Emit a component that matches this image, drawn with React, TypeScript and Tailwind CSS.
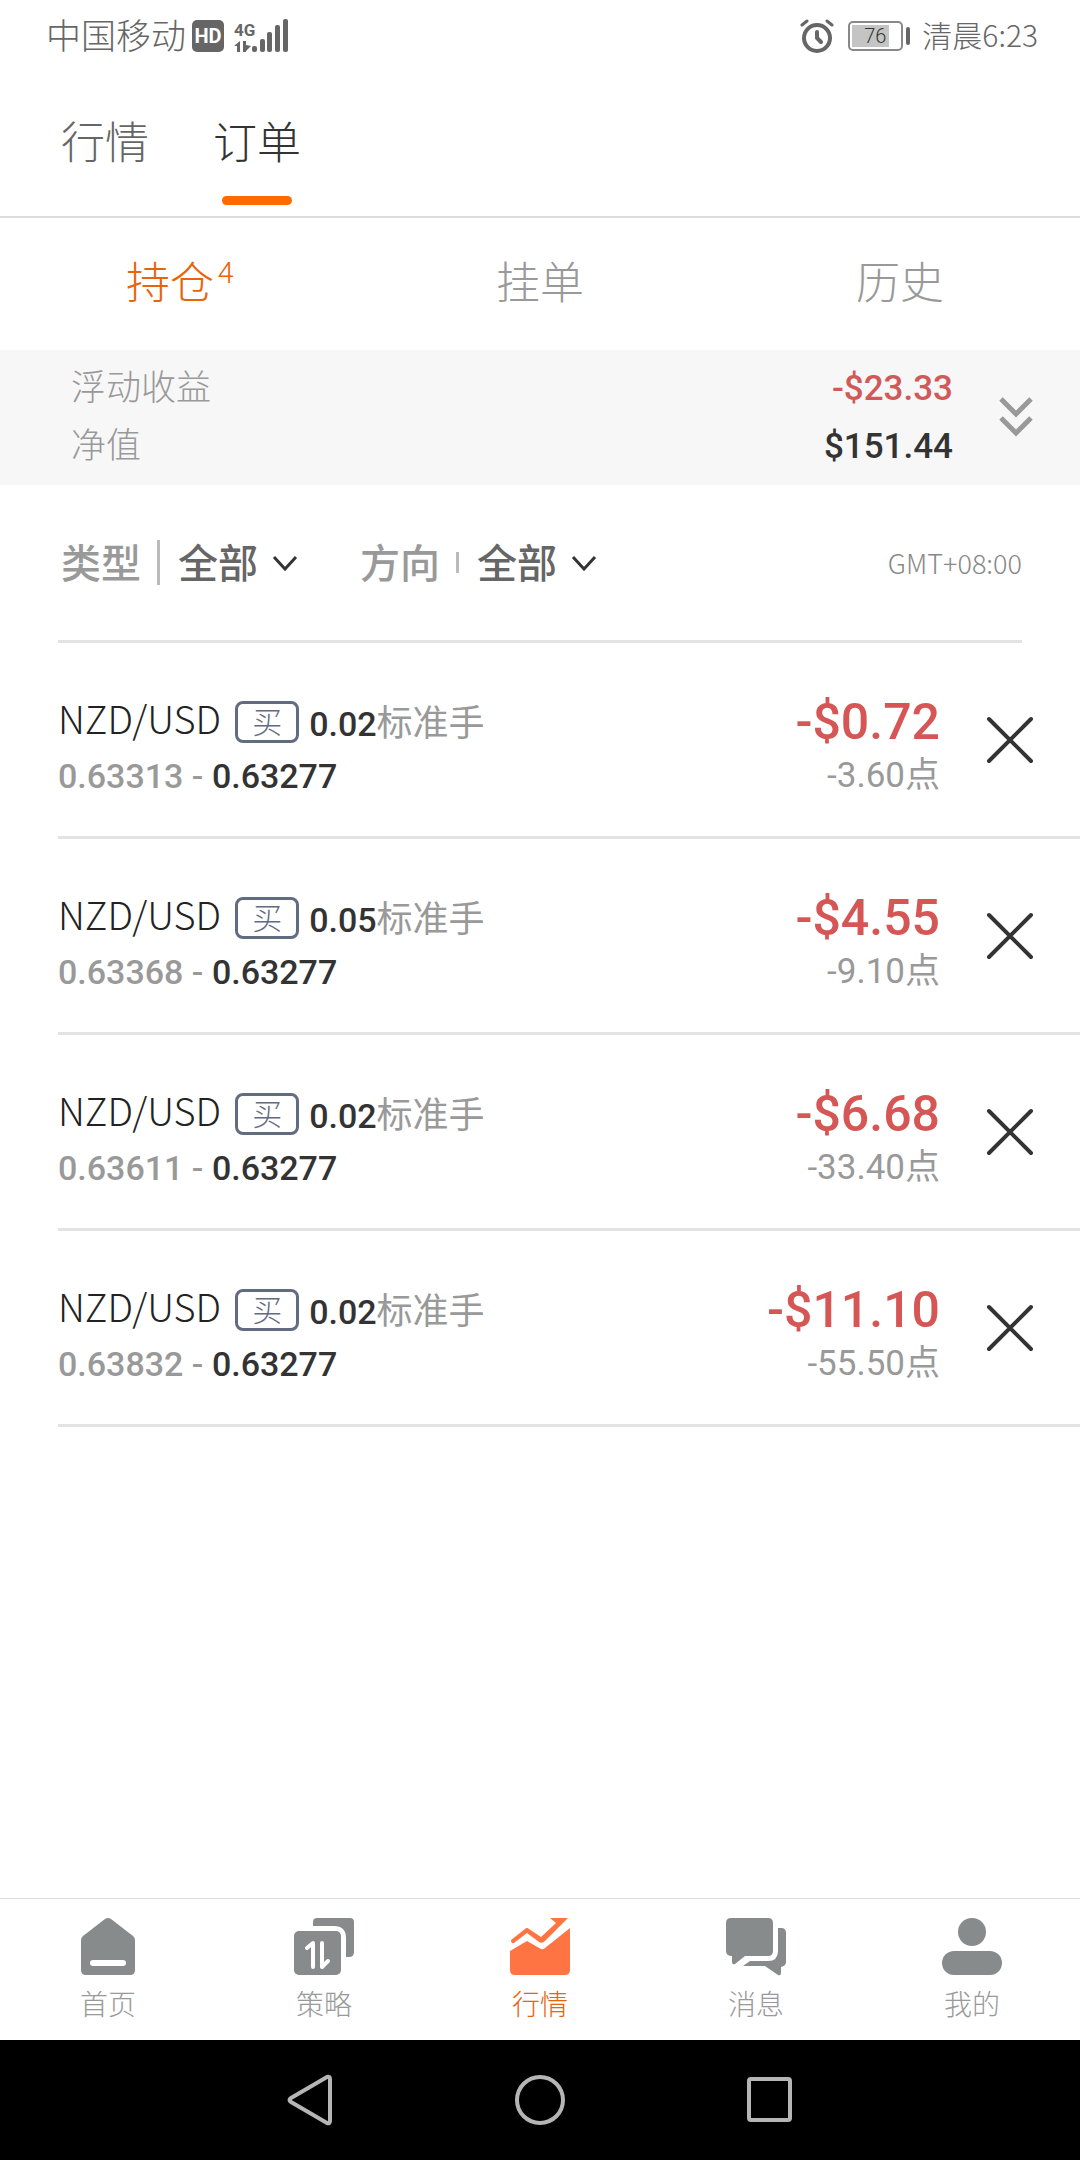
import { useState } from "react";

type Order = {
  id: number;
  symbol: string;
  side: string;
  lots: string;
  open: string;
  current: string;
  profit: string;
  points: string;
};

const orders: Order[] = [
  { id: 1, symbol: "NZD/USD", side: "买", lots: "0.02", open: "0.63313", current: "0.63277", profit: "-$0.72", points: "-3.60" },
  { id: 2, symbol: "NZD/USD", side: "买", lots: "0.05", open: "0.63368", current: "0.63277", profit: "-$4.55", points: "-9.10" },
  { id: 3, symbol: "NZD/USD", side: "买", lots: "0.02", open: "0.63611", current: "0.63277", profit: "-$6.68", points: "-33.40" },
  { id: 4, symbol: "NZD/USD", side: "买", lots: "0.02", open: "0.63832", current: "0.63277", profit: "-$11.10", points: "-55.50" },
];

function StatusBar() {
  return (
    <div className="flex h-[72px] items-center justify-between pl-[46px] pr-[42px] text-[#666]">
      <div className="flex items-center">
        <span className="pb-1 text-[35px] leading-[48px] font-light">中国移动</span>
        <span className="ml-[6px] flex h-8 w-8 items-center justify-center rounded-[5px] bg-[#666] font-['Roboto'] text-[20px] leading-none font-bold text-white">
          HD
        </span>
        <div className="ml-[10px] flex h-[34px] items-end">
          <div className="flex w-[18px] flex-col items-start">
            <span className="font-['Roboto'] text-[17px] leading-[18px] font-bold">4G</span>
            <svg viewBox="0 0 18 14" className="h-[14px] w-[18px]" fill="currentColor">
              <path d="M6 2v11H3V7H0zM9 2h3v4l5 1-5 5v1H9z" />
            </svg>
          </div>
          <svg viewBox="0 0 36 34" className="h-[34px] w-9" fill="currentColor">
            <rect x="0" y="27" width="5" height="6" rx="2" />
            <rect x="8" y="20" width="5" height="13" rx="2" />
            <rect x="15" y="13" width="5" height="20" rx="2" />
            <rect x="23" y="6" width="5" height="27" rx="2" />
            <rect x="31" y="0" width="5" height="33" rx="2" />
          </svg>
        </div>
      </div>

      <div className="flex items-center">
        <svg viewBox="0 0 34 34" className="h-[34px] w-[34px]" fill="none" stroke="currentColor" strokeLinecap="round">
          <circle cx="17" cy="19" r="13" strokeWidth="4" />
          <path d="M17 13v6l4 4" strokeWidth="4" strokeLinejoin="round" />
          <path d="M2 6l5-4M32 6l-5-4" strokeWidth="3" />
        </svg>
        <div className="ml-[14px] flex items-center gap-[3px]">
          <div className="flex h-[30px] w-[55px] items-center rounded-[5px] border-2 border-[#888] p-[2px]">
            <span className="flex h-[22px] w-[37px] items-center justify-end bg-[#c4c4c4] pr-[3px] font-['Roboto'] text-[20px] leading-none font-light text-[#333]">
              76
            </span>
          </div>
          <span className="h-[18px] w-1 rounded-sm bg-[#666]" />
        </div>
        <span className="ml-3 pb-1 text-[30px] leading-[48px] font-light">清晨6:23</span>
      </div>
    </div>
  );
}

function Header({ active, onChange }: { active: string; onChange: (tab: string) => void }) {
  return (
    <nav className="flex gap-16 border-b-2 border-[#ddd] pl-[61px]">
      {["行情", "订单"].map((tab) => (
        <button
          key={tab}
          type="button"
          onClick={() => onChange(tab)}
          className={`flex flex-col items-center pt-[38px] pb-[11px] text-[44px] leading-[60px] font-light ${
            active === tab ? "text-[#333]" : "text-[#666]"
          }`}
        >
          {tab}
          <span className={`mt-[26px] h-[9px] w-[70px] rounded-full ${active === tab ? "bg-[#ff6a00]" : ""}`} />
        </button>
      ))}
    </nav>
  );
}

function OrderTabs({ active, onChange }: { active: string; onChange: (tab: string) => void }) {
  return (
    <div className="grid h-[132px] grid-cols-3">
      {["持仓", "挂单", "历史"].map((tab) => (
        <button
          key={tab}
          type="button"
          onClick={() => onChange(tab)}
          className={`flex items-center justify-center gap-1 pb-2 text-[44px] leading-[60px] font-light ${
            active === tab ? "text-[#e8640c]" : "text-[#999]"
          }`}
        >
          {tab}
          {tab === "持仓" && <span className="self-start pt-7 text-[30px] leading-[48px]">{orders.length}</span>}
        </button>
      ))}
    </div>
  );
}

function Summary() {
  return (
    <section className="flex h-[135px] items-center bg-[#f7f7f7] pr-[46px] pl-[71px]">
      <dl className="flex-1">
        <div className="flex h-[58px] justify-between">
          <dt className="text-[35px] leading-[50px] font-light text-[#999]">浮动收益</dt>
          <dd className="font-['Roboto'] text-[35px] leading-[58px] font-medium text-[#d05a5a]">-$23.33</dd>
        </div>
        <div className="flex h-[58px] justify-between">
          <dt className="text-[35px] leading-[50px] font-light text-[#999]">净值</dt>
          <dd className="font-['Roboto'] text-[35px] leading-[58px] font-medium text-[#333]">$151.44</dd>
        </div>
      </dl>
      <button type="button" aria-label="展开" className="ml-[45px]">
        <svg viewBox="0 0 36 44" className="h-11 w-9" fill="none" stroke="#999" strokeWidth="5">
          <path d="M3 3l15 15L33 3M3 22l15 15 15-15" />
        </svg>
      </button>
    </section>
  );
}

function Filter({ id, label, options, divider }: { id: string; label: string; options: string[]; divider: string }) {
  return (
    <div className="flex items-center text-[40px] leading-[56px] font-medium">
      <label htmlFor={id} className="pb-1 text-[#999]">
        {label}
      </label>
      <span className={`mr-[18px] ml-4 w-[3px] bg-[#bbb] ${divider}`} />
      <div className="relative">
        <select id={id} className="w-[120px] appearance-none bg-transparent pb-1 text-[#666] outline-none">
          {options.map((option) => (
            <option key={option}>{option}</option>
          ))}
        </select>
        <svg
          viewBox="0 0 26 16"
          className="pointer-events-none absolute top-1/2 right-0 h-4 w-[26px] -translate-y-1/2"
          fill="none"
          stroke="#333"
          strokeWidth="3"
        >
          <path d="M2 2l11 12L24 2" />
        </svg>
      </div>
    </div>
  );
}

function OrderRow({ order, onClose }: { order: Order; onClose: () => void }) {
  return (
    <li className="flex h-[196px] items-center border-b-3 border-[#e3e3e3] pr-[45px]">
      <div className="flex-1 pt-4">
        <div className="flex h-14 items-center">
          <span className="self-start text-[38px] leading-[48px] font-light text-[#222]">{order.symbol}</span>
          <span className="ml-[14px] flex h-[42px] w-16 items-center justify-center rounded-lg border-3 border-[#636b80] pb-1 text-[30px] leading-none font-light text-[#636b80]">
            {order.side}
          </span>
          <span className="ml-[10px] pt-1 font-['Roboto','Noto_Sans_CJK_SC',sans-serif] text-[36px] leading-[56px] text-[#999]">
            <span className="text-[34px] font-medium text-[#333]">{order.lots}</span>
            标准手
          </span>
        </div>
        <div className="font-['Roboto'] text-[34px] leading-[52px] font-medium text-[#999]">
          {order.open} - <span className="text-[#333]">{order.current}</span>
        </div>
      </div>
      <div className="pt-4 text-right">
        <div className="font-['Roboto'] text-[50px] leading-[56px] font-medium text-[#d65656]">{order.profit}</div>
        <div className="font-['Roboto','Noto_Sans_CJK_SC',sans-serif] text-[35px] leading-[52px] text-[#999]">
          {order.points}点
        </div>
      </div>
      <button type="button" aria-label="平仓" onClick={onClose} className="ml-[45px]">
        <svg viewBox="0 0 50 50" className="h-[50px] w-[50px]" fill="none" stroke="#333" strokeWidth="4" strokeLinecap="round">
          <path d="M4 4l42 42M46 4L4 46" />
        </svg>
      </button>
    </li>
  );
}

const navItems = [
  {
    label: "首页",
    icon: (
      <>
        <path d="M27 2q3-2 6 0l22 17q2 2 2 4v30q0 5-5 5H8q-5 0-5-5V23q0-2 2-4z" />
        <rect x="12" y="43" width="36" height="6" rx="3" fill="#fff" />
      </>
    ),
  },
  {
    label: "策略",
    icon: (
      <>
        <path d="M19 9V5q0-4 4-4h33q4 0 4 4v30q0 5-5 5h-3V21Q52 9 40 9z" />
        <rect x="0" y="14" width="47" height="44" rx="5" />
        <path d="M13 31l6-5v24M28 26v24l6-6" fill="none" stroke="#fff" strokeWidth="4" strokeLinecap="round" strokeLinejoin="round" />
      </>
    ),
  },
  {
    label: "行情",
    icon: (
      <>
        <path d="M1 23L15 12q2-2 4 0l12 8L46 6l-6-5h18L35 24q-3 3-6 1l-12-9L4 26q-3 1-3-3z" />
        <path d="M0 34l17-10 14 8q2 1 4-1L60 11v42q0 5-5 5H5q-5 0-5-5z" />
      </>
    ),
  },
  {
    label: "消息",
    icon: (
      <>
        <path d="M5 1h37q5 0 5 5v28q0 5-5 5H19L9 47q-3 1-3-2v-6q-6 0-6-5V6q0-5 5-5z" />
        <path d="M52 11h3q5 0 5 5v29q0 4-5 5v6q0 3-3 2l-13-9H17l7-5h18q10 0 10-10z" />
      </>
    ),
  },
  {
    label: "我的",
    icon: (
      <>
        <circle cx="30" cy="15" r="14" />
        <rect x="0" y="34" width="60" height="24" rx="12" />
      </>
    ),
  },
];

function BottomNav() {
  return (
    <nav className="grid h-[142px] grid-cols-5 border-t border-[#ddd]">
      {navItems.map((item) => (
        <a
          key={item.label}
          href="#"
          className={`flex flex-col items-center pt-[18px] ${item.label === "行情" ? "text-[#ff7443]" : "text-[#888b8b]"}`}
        >
          <svg viewBox="0 0 60 60" className="h-[60px] w-[60px]" fill="currentColor">
            {item.icon}
          </svg>
          <span
            className={`mt-[6px] text-[28px] leading-10 font-light ${
              item.label === "行情" ? "text-[#e8640c]" : "text-[#999]"
            }`}
          >
            {item.label}
          </span>
        </a>
      ))}
    </nav>
  );
}

function SystemBar() {
  return (
    <div className="flex h-[120px] items-center justify-center gap-[178px] bg-black">
      <button type="button" aria-label="返回">
        <svg viewBox="0 0 52 52" className="h-[52px] w-[52px]" fill="none" stroke="#b5b5b5" strokeWidth="4" strokeLinejoin="round">
          <path d="M43 3q3-1 3 2v42q0 3-3 2L7 28q-3-2 0-4z" />
        </svg>
      </button>
      <button type="button" aria-label="主屏幕">
        <svg viewBox="0 0 52 52" className="h-[52px] w-[52px]" fill="none" stroke="#b5b5b5" strokeWidth="4">
          <circle cx="26" cy="26" r="23" />
        </svg>
      </button>
      <button type="button" aria-label="最近任务">
        <svg viewBox="0 0 52 52" className="h-[52px] w-[52px]" fill="none" stroke="#b5b5b5" strokeWidth="4">
          <rect x="5" y="5" width="41" height="41" rx="2" />
        </svg>
      </button>
    </div>
  );
}

export default function App() {
  const [page, setPage] = useState("订单");
  const [tab, setTab] = useState("持仓");
  const [openOrders, setOpenOrders] = useState(orders);

  return (
    <div className="flex min-h-screen flex-col bg-white font-['Noto_Sans_CJK_SC',sans-serif]">
      <StatusBar />
      <Header active={page} onChange={setPage} />
      <OrderTabs active={tab} onChange={setTab} />
      <Summary />

      <main className="flex-1">
        <div className="mx-[58px] flex h-[158px] items-center justify-between border-b-3 border-[#e3e3e3]">
          <div className="flex gap-[62px] pl-[3px]">
            <Filter id="type" label="类型" options={["全部", "市价", "限价"]} divider="h-[45px]" />
            <Filter id="side" label="方向" options={["全部", "买", "卖"]} divider="h-[21px]" />
          </div>
          <span className="text-[27px] leading-10 font-light text-[#888]">GMT+08:00</span>
        </div>

        <ul className="ml-[58px]">
          {openOrders.map((order) => (
            <OrderRow
              key={order.id}
              order={order}
              onClose={() => setOpenOrders(openOrders.filter((o) => o.id !== order.id))}
            />
          ))}
        </ul>
      </main>

      <BottomNav />
      <SystemBar />
    </div>
  );
}
